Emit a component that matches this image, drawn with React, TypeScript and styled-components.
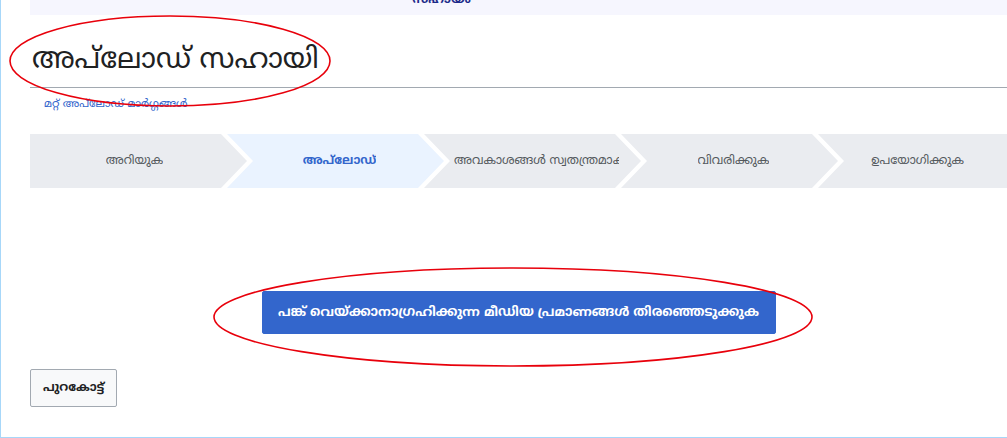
import styled, { createGlobalStyle } from "styled-components";

const GlobalStyle = createGlobalStyle`
  html, body {
    margin: 0;
    padding: 0;
    background: #fff;
    overflow: hidden;
  }
  body {
    font-family: "Noto Sans Malayalam", "Noto Sans", "DejaVu Sans", sans-serif;
    color: #202122;
  }
  * {
    box-sizing: border-box;
  }
`;

const steps = [
  "അറിയുക",
  "അപ്‌ലോഡ്",
  "അവകാശങ്ങൾ സ്വതന്ത്രമാക്കുക",
  "വിവരിക്കുക",
  "ഉപയോഗിക്കുക",
];

export default function App() {
  return (
    <>
      <GlobalStyle />
      <SContent>
        <SBanner>
          <SBannerText>സഹായം</SBannerText>
        </SBanner>
        <STitle>അപ്‌ലോഡ് സഹായി</STitle>
        <SAltLink href="#">മറ്റ് അപ്‌ലോഡ് മാർഗ്ഗങ്ങൾ</SAltLink>
        <SSteps>
          {steps.map((label, i) => (
            <SStep
              key={label}
              $active={i === 1}
              $first={i === 0}
              $last={i === steps.length - 1}
            >
              <SStepLabel>{label}</SStepLabel>
            </SStep>
          ))}
        </SSteps>
        <SMain>
          <SPrimaryButton>പങ്ക് വെയ്ക്കാനാഗ്രഹിക്കുന്ന മീഡിയ പ്രമാണങ്ങൾ തിരഞ്ഞെടുക്കുക</SPrimaryButton>
        </SMain>
        <SFooter>
          <SBackButton>പുറകോട്ട്</SBackButton>
        </SFooter>
      </SContent>
      <SMarks viewBox="0 0 1007 438" width="1007" height="438">
        <ellipse cx="170" cy="61" rx="160" ry="45" fill="none" stroke="#e8000b" strokeWidth="1.6" />
        <ellipse cx="513" cy="317" rx="299" ry="49" fill="none" stroke="#e8000b" strokeWidth="1.6" />
      </SMarks>
    </>
  );
}

const SContent = styled.div`
  height: 438px;
  border-left: 1px solid #a7d7f9;
  border-bottom: 1px solid #a7d7f9;
  padding-left: 29px;
  display: flex;
  flex-direction: column;
`;

const SBanner = styled.div`
  height: 15px;
  flex-shrink: 0;
  background: #f6f6fe;
  overflow: hidden;
  display: flex;
  justify-content: center;
  align-items: flex-start;
  padding-right: 154px;
`;

const SBannerText = styled.span`
  font-size: 12px;
  font-weight: bold;
  color: #1d2b8a;
  line-height: 14px;
  margin-top: -6px;
`;

const STitle = styled.h1`
  margin: 24px 0 0;
  padding: 0 0 4px 2px;
  font-size: 28.5px;
  font-weight: normal;
  line-height: 44px;
  border-bottom: 1px solid #a2a9b1;
`;

const SAltLink = styled.a`
  margin: 9px 0 0 14px;
  font-size: 11px;
  line-height: 14px;
  color: #3366cc;
  text-decoration: none;
  align-self: flex-start;
`;

const SSteps = styled.div`
  margin-top: 23px;
  display: flex;
  height: 54px;
  flex-shrink: 0;
`;

const SStep = styled.div<{ $active: boolean; $first: boolean; $last: boolean }>`
  flex: ${(p) => (p.$last ? "1 1 0" : "0 0 217px")};
  margin-left: ${(p) => (p.$first ? "0" : "-20px")};
  padding-left: ${(p) => (p.$first ? "14px" : "30px")};
  padding-right: ${(p) => (p.$last ? "20px" : "22px")};
  background: ${(p) => (p.$active ? "#eaf3ff" : "#eaecf0")};
  color: ${(p) => (p.$active ? "#3366cc" : "#54595d")};
  font-weight: ${(p) => (p.$active ? "bold" : "normal")};
  clip-path: ${(p) =>
    p.$first
      ? "polygon(0 0, calc(100% - 26px) 0, 100% 50%, calc(100% - 26px) 100%, 0 100%)"
      : p.$last
      ? "polygon(0 0, 100% 0, 100% 100%, 0 100%, 26px 50%)"
      : "polygon(0 0, calc(100% - 26px) 0, 100% 50%, calc(100% - 26px) 100%, 0 100%, 26px 50%)"};
  display: flex;
  align-items: center;
  justify-content: center;
  min-width: 0;
  overflow: hidden;
`;

const SStepLabel = styled.span`
  font-size: 12px;
  white-space: nowrap;
  overflow: hidden;
  max-width: 165px;
`;

const SMain = styled.div`
  display: flex;
  justify-content: center;
  margin-top: 103px;
`;

const SPrimaryButton = styled.button`
  height: 43px;
  padding: 0 12px;
  width: 514px;
  background: #3366cc;
  color: #fff;
  border: 1px solid #3366cc;
  border-radius: 2px;
  font-family: inherit;
  font-size: 13px;
  font-weight: bold;
  white-space: nowrap;
  cursor: pointer;
`;

const SFooter = styled.div`
  margin-top: 35px;
  display: flex;
`;

const SBackButton = styled.button`
  height: 38px;
  padding: 0 12px;
  background: #f8f9fa;
  color: #202122;
  border: 1px solid #a2a9b1;
  border-radius: 2px;
  font-family: inherit;
  font-size: 12px;
  font-weight: bold;
  cursor: pointer;
`;

const SMarks = styled.svg`
  position: absolute;
  top: 0;
  left: 0;
  pointer-events: none;
`;
